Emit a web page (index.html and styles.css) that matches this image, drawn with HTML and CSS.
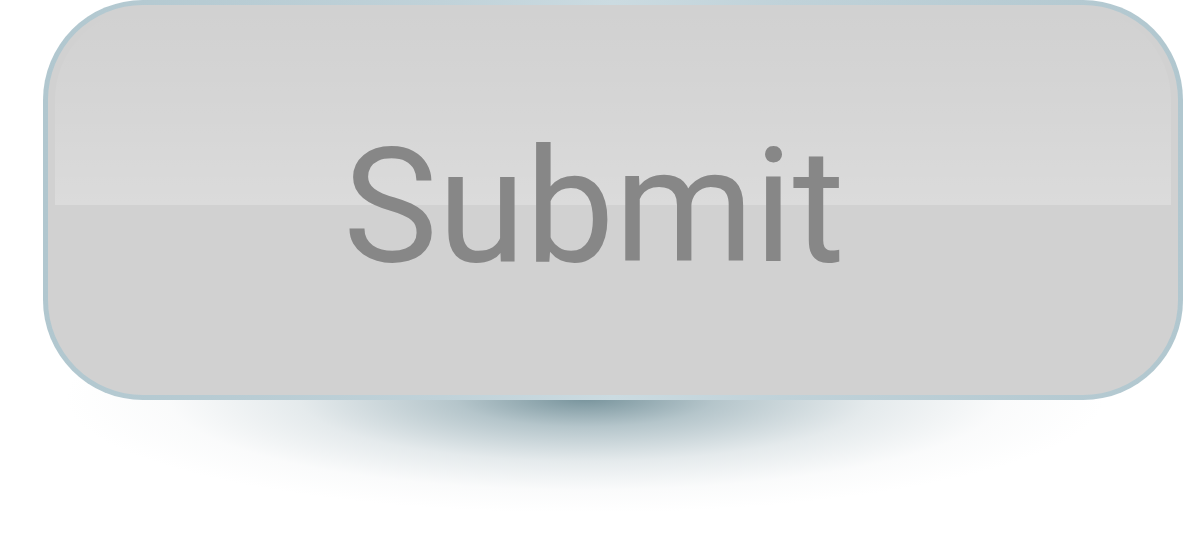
FILE: index.html
```html
<!DOCTYPE html>
<html>
<head>
<meta charset="utf-8">
<link rel="stylesheet" href="styles.css">
</head>
<body>
<div class="stage">
  <button class="submit-btn" type="button"><span class="label">Submit</span></button>
</div>
</body>
</html>
```
FILE: styles.css
```css
html, body {
  margin: 0;
  padding: 0;
  background: #ffffff;
}
.stage {
  position: relative;
  width: 1204px;
  height: 537px;
  display: flex;
  align-items: flex-start;
  padding-left: 43px;
  box-sizing: border-box;
  overflow: hidden;
}
.stage::before {
  content: "";
  position: absolute;
  left: 0;
  top: 0;
  width: 1204px;
  height: 537px;
  background: radial-gradient(ellipse 520px 115px at 585px 398px,
    rgba(95, 128, 138, 0.85) 0%,
    rgba(120, 150, 160, 0.55) 25%,
    rgba(150, 172, 180, 0.25) 55%,
    rgba(190, 200, 205, 0.08) 80%,
    rgba(255, 255, 255, 0) 100%);
}
.submit-btn {
  position: relative;
  width: 1140px;
  height: 400px;
  margin: 0;
  padding: 0;
  border: 5px solid transparent;
  border-radius: 100px;
  background:
    linear-gradient(#d1d1d1, #d1d1d1) padding-box,
    linear-gradient(90deg, #b1c7cf 0%, #c0d2d9 35%, #cbdbe1 50%, #c0d2d9 65%, #b1c7cf 100%) border-box;
  display: flex;
  align-items: center;
  justify-content: center;
  font-family: Roboto, "Liberation Sans", sans-serif;
  cursor: pointer;
}
.submit-btn::before {
  content: "";
  position: absolute;
  left: 7px;
  right: 7px;
  top: 3px;
  height: 197px;
  border-radius: 92px 92px 0 0;
  background: linear-gradient(180deg, rgba(255,255,255,0) 0%, rgba(255,255,255,0.12) 60%, rgba(255,255,255,0.22) 100%);
}
.label {
  position: relative;
  font-size: 159px;
  font-weight: 400;
  color: #878787;
  line-height: 1;
  margin-top: 12px;
  margin-right: 38px;
}
```
